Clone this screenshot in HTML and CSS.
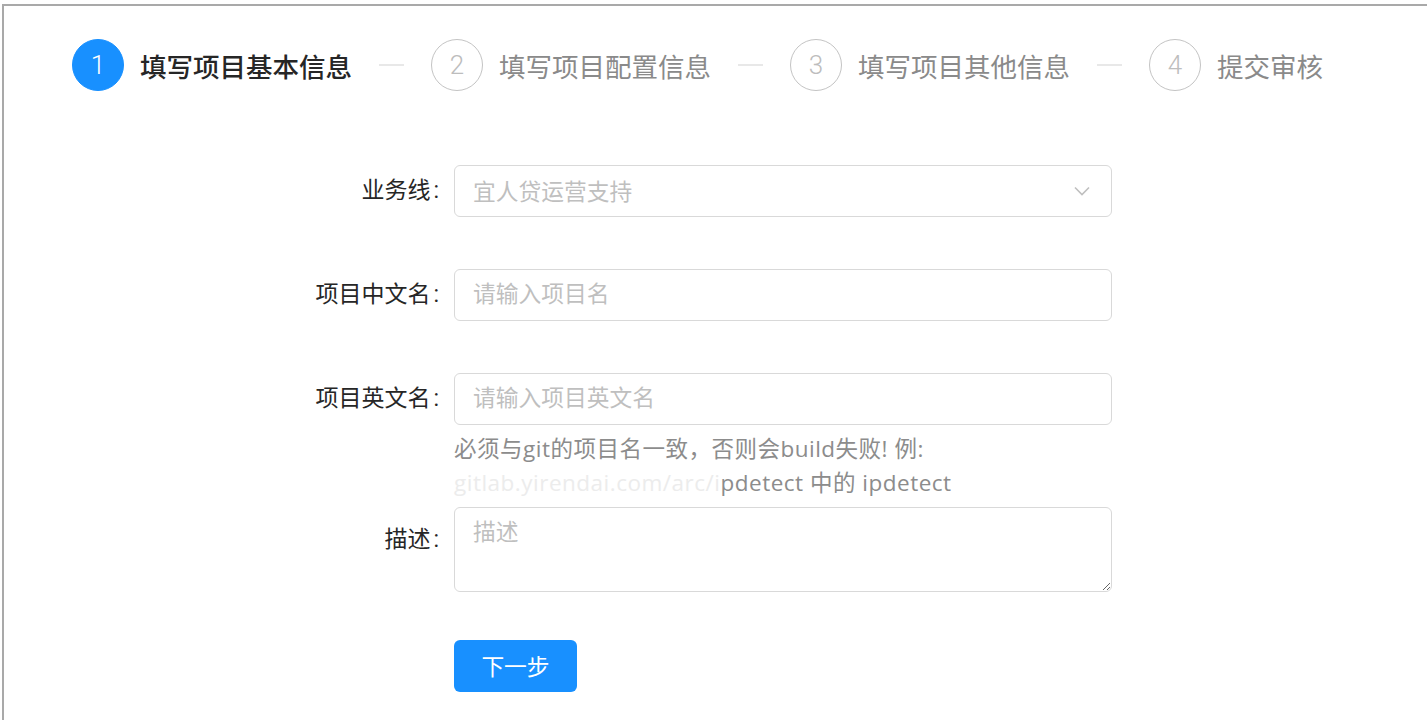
FILE: index.html
```html
<!DOCTYPE html>
<html lang="zh-CN">
  <head>
    <meta charset="UTF-8" />
    <meta name="viewport" content="width=device-width, initial-scale=1.0" />
    <title>新建项目</title>
    <link rel="stylesheet" href="styles.css">
  </head>

  <body>
    <div class="page">
      <div class="steps">
        <div class="step active">
          <div class="step-icon">1</div>
          <div class="step-title">填写项目基本信息</div>
        </div>
        <div class="step-line"></div>
        <div class="step">
          <div class="step-icon">2</div>
          <div class="step-title">填写项目配置信息</div>
        </div>
        <div class="step-line"></div>
        <div class="step">
          <div class="step-icon">3</div>
          <div class="step-title">填写项目其他信息</div>
        </div>
        <div class="step-line"></div>
        <div class="step">
          <div class="step-icon">4</div>
          <div class="step-title">提交审核</div>
        </div>
      </div>

      <div class="form">
        <div class="form-row">
          <div class="label"><span>业务线</span></div>
          <div class="control">
            <div class="control-line">
              <div class="select">
                <span class="select-value">宜人贷运营支持</span>
                <svg class="select-arrow" width="16" height="10" viewBox="0 0 16 10">
                  <path d="M1 1.5 L8 8.5 L15 1.5" fill="none" stroke="#bfbfbf" stroke-width="1.6" />
                </svg>
              </div>
            </div>
          </div>
        </div>

        <div class="form-row">
          <div class="label"><span>项目中文名</span></div>
          <div class="control">
            <div class="control-line">
              <input type="text" class="input" placeholder="请输入项目名" />
            </div>
          </div>
        </div>

        <div class="form-row has-help">
          <div class="label"><span>项目英文名</span></div>
          <div class="control">
            <div class="control-line">
              <input type="text" class="input" placeholder="请输入项目英文名" />
            </div>
            <div class="help">
              必须与git的项目名一致，否则会build失败! 例:
              <span class="masked">gitlab.yirendai.com/arc/i</span>pdetect 中的 ipdetect
            </div>
          </div>
        </div>

        <div class="form-row textarea-row">
          <div class="label"><span>描述</span></div>
          <div class="control">
            <textarea class="textarea" placeholder="描述"></textarea>
          </div>
        </div>

        <div class="form-row">
          <div class="label"></div>
          <div class="control">
            <div class="control-line">
              <button class="btn-primary">下一步</button>
            </div>
          </div>
        </div>
      </div>
    </div>
  </body>
</html>
```

FILE: styles.css
```css
body {
  margin: 0;
  background-color: #fff;
  font-family: Roboto, 'Noto Sans CJK SC', sans-serif;
}

.page {
  margin: 4px 0 0 2px;
  border-top: 2px solid #a9a9a9;
  border-left: 2px solid #a9a9a9;
  min-height: 720px;
}

/* steps */
.steps {
  display: flex;
  align-items: center;
  padding: 33px 0 0 68px;
}

.step {
  display: flex;
  align-items: center;
  gap: 16px;
}

.step-icon {
  width: 52px;
  height: 52px;
  box-sizing: border-box;
  border: 1.6px solid #c4c4c4;
  border-radius: 50%;
  display: flex;
  justify-content: center;
  align-items: center;
  font-size: 26px;
  font-weight: 300;
  color: #bdbdbd;
}

.step-title {
  font-size: 26.5px;
  color: #8a8a8a;
}

.step.active .step-icon {
  background-color: #1890ff;
  border-color: #1890ff;
  color: #fff;
}

.step.active .step-title {
  color: #262626;
  font-weight: 500;
}

.step-line {
  width: 25px;
  height: 2px;
  margin: 0 27px;
  background-color: #e8e8e8;
}

/* form */
.form {
  padding-top: 67px;
}

.form-row {
  display: flex;
  align-items: flex-start;
  margin-bottom: 39px;
}

.form-row.has-help {
  margin-bottom: 7px;
}

.form-row.textarea-row {
  margin-bottom: 41px;
}

.label {
  width: 450px;
  flex-shrink: 0;
  text-align: right;
  line-height: 65px;
  font-size: 23px;
  color: #262626;
}

.label span::after {
  content: ':';
  margin: 0 15px 0 3px;
}

.control {
  width: 658px;
}

.control-line {
  height: 65px;
  display: flex;
  align-items: center;
}

.input,
.select,
.textarea {
  width: 100%;
  box-sizing: border-box;
  border: 1.5px solid #d9d9d9;
  border-radius: 6px;
  background-color: #fff;
  font-family: Roboto, 'Noto Sans CJK SC', sans-serif;
  font-size: 22.75px;
  color: #262626;
  outline: none;
}

.input {
  height: 52px;
  padding: 0 18px;
}

.input::placeholder,
.textarea::placeholder {
  color: #bfbfbf;
}

.select {
  height: 52px;
  display: flex;
  align-items: center;
  justify-content: space-between;
  padding: 0 21px 0 18px;
}

.select-value {
  color: #bfbfbf;
}

.textarea {
  display: block;
  height: 85px;
  padding: 8px 18px;
  line-height: 1.5;
}

.help {
  margin-top: 1px;
  font-family: 'Open Sans', 'Noto Sans CJK SC', sans-serif;
  font-size: 22.5px;
  line-height: 34px;
  letter-spacing: 0.5px;
  color: #8c8c8c;
}

.masked {
  color: #ececec;
}

.btn-primary {
  width: 123px;
  height: 52px;
  border: none;
  border-radius: 6px;
  background-color: #1890ff;
  color: #fff;
  font-family: Roboto, 'Noto Sans CJK SC', sans-serif;
  font-size: 22.75px;
  cursor: pointer;
}
```
